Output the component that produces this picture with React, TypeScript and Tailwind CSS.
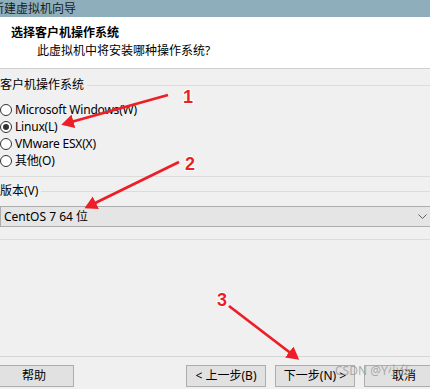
import React from 'react';

const font = { fontFamily: '"Noto Sans", "Noto Sans CJK SC", sans-serif' };

function Radio({ label, checked }: { label: string; checked?: boolean }) {
  return (
    <div className="flex h-[17px] items-center">
      <span className="flex h-[12px] w-[12px] items-center justify-center rounded-full border border-[#333333] bg-white">
        {checked && <span className="h-[6px] w-[6px] rounded-full bg-[#333333]" />}
      </span>
      <span className="ml-[3px] text-[12px] leading-none tracking-[-0.2px] text-black">{label}</span>
    </div>
  );
}

function GroupLabel({ text }: { text: string }) {
  return (
    <div className="flex h-[14px] items-center">
      <span className="pr-[3px] text-[12px] leading-none text-black">{text}</span>
      <div className="h-px flex-1 bg-[#dcdcdc]" />
    </div>
  );
}

function Button({ label, className = '' }: { label: string; className?: string }) {
  return (
    <div
      className={`flex h-[22px] w-[80px] shrink-0 items-center justify-center border border-[#adadad] bg-[#e1e1e1] text-[12px] text-black ${className}`}
    >
      {label}
    </div>
  );
}

function Annotations() {
  const red = '#ec1f28';
  return (
    <svg className="pointer-events-none absolute left-0 top-0" width="430" height="389" viewBox="0 0 430 389">
      <defs>
        <marker id="head" markerWidth="5" markerHeight="5" refX="3.5" refY="2.5" orient="auto" markerUnits="strokeWidth">
          <path d="M0,0 L4.5,2.5 L0,5 Z" fill={red} />
        </marker>
      </defs>
      <line x1="168" y1="95" x2="64" y2="124" stroke={red} strokeWidth="2.8" markerEnd="url(#head)" />
      <line x1="179" y1="162" x2="87" y2="207" stroke={red} strokeWidth="2.8" markerEnd="url(#head)" />
      <line x1="229" y1="306" x2="297" y2="358" stroke={red} strokeWidth="2.8" markerEnd="url(#head)" />
      <g fontFamily='"Liberation Sans", Arial, sans-serif' fontWeight="bold" fontSize="18" fill={red} stroke="#ffffff" strokeWidth="2" style={{ paintOrder: 'stroke' }}>
        <text x="183" y="103">1</text>
        <text x="185" y="170">2</text>
        <text x="217" y="306">3</text>
      </g>
    </svg>
  );
}

export default function App() {
  return (
    <div className="relative h-[389px] w-[430px] overflow-hidden bg-[#f0f0f0]" style={font}>
      {/* title bar */}
      <div className="flex h-[17px] items-center overflow-hidden bg-[#8eaebb]">
        <span className="ml-[-8px] text-[12px] leading-none text-[#1a1a1a]">新建虚拟机向导</span>
      </div>

      {/* header */}
      <div className="h-[52px] border-b border-[#d0d0d0] bg-white">
        <div className="pl-[11px] pt-[9px] text-[12px] font-bold leading-[14px] text-black">选择客户机操作系统</div>
        <div className="pl-[37px] pt-[4px] text-[12px] leading-[14px] text-black">此虚拟机中将安装哪种操作系统?</div>
      </div>

      {/* guest OS group */}
      <div className="mt-[9px]">
        <GroupLabel text="客户机操作系统" />
      </div>
      <div className="mt-[9px] flex flex-col">
        <Radio label="Microsoft Windows(W)" />
        <Radio label="Linux(L)" checked />
        <Radio label="VMware ESX(X)" />
        <Radio label="其他(O)" />
      </div>
      <div className="mt-[7px] h-px bg-[#dcdcdc]" />

      {/* version group */}
      <div className="mt-[7px]">
        <GroupLabel text="版本(V)" />
      </div>
      <div className="mt-[8px] flex h-[21px] w-[440px] items-center border border-[#adadad] bg-[#e5e5e5]">
        <span className="pl-[3px] text-[12px] leading-none text-black">CentOS 7 64 位</span>
        <svg className="ml-auto mr-[12px]" width="9" height="6" viewBox="0 0 9 6">
          <path d="M0.5 0.5 L4.5 4.5 L8.5 0.5" fill="none" stroke="#606060" strokeWidth="1" />
        </svg>
      </div>
      <div className="mt-[12px] h-px bg-[#dcdcdc]" />

      {/* footer */}
      <div className="mt-[116px] h-px bg-[#d5d5d5]" />
      <div className="mt-[8px] flex">
        <Button label="帮助" className="ml-[-6px] w-[79px]" />
        <Button label="< 上一步(B)" className="ml-[112px]" />
        <Button label="下一步(N) >" className="ml-[9px] border-[#0078d7]" />
        <Button label="取消" className="ml-[9px]" />
      </div>

      <span className="pointer-events-none absolute left-[335px] top-[362px] text-[12px] text-[#9a9a9a]/80">CSDN @Y小伍</span>
      <Annotations />
    </div>
  );
}
